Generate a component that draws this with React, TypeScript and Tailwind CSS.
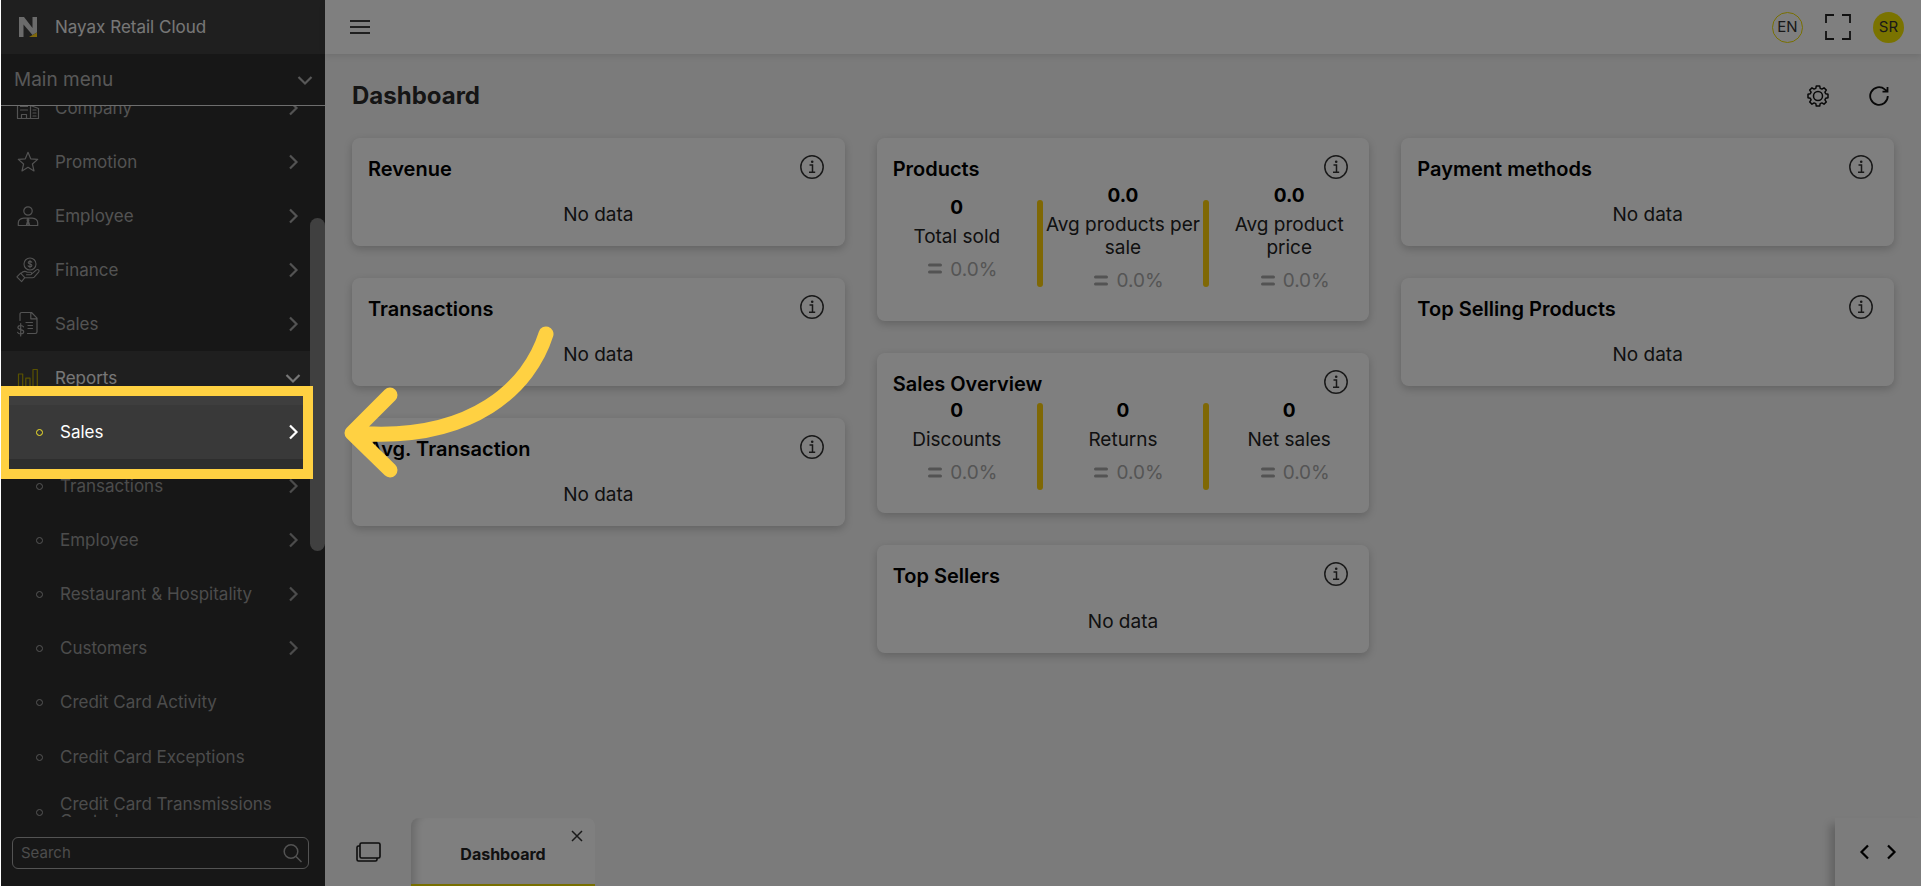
import type { ReactNode } from "react";

type Stat = { value: string; label: string; change: string };

const MENU = [
  { label: "Company", icon: <CompanyIcon /> },
  { label: "Promotion", icon: <StarIcon /> },
  { label: "Employee", icon: <EmployeeIcon /> },
  { label: "Finance", icon: <FinanceIcon /> },
  { label: "Sales", icon: <SalesIcon /> },
];

const REPORTS = [
  { label: "Sales", children: true, active: true },
  { label: "Transactions", children: true },
  { label: "Employee", children: true },
  { label: "Restaurant & Hospitality", children: true },
  { label: "Customers", children: true },
  { label: "Credit Card Activity" },
  { label: "Credit Card Exceptions" },
  { label: "Credit Card Transmissions Control" },
];

const PRODUCT_STATS: Stat[] = [
  { value: "0", label: "Total sold", change: "0.0%" },
  { value: "0.0", label: "Avg products per sale", change: "0.0%" },
  { value: "0.0", label: "Avg product price", change: "0.0%" },
];

const SALES_STATS: Stat[] = [
  { value: "0", label: "Discounts", change: "0.0%" },
  { value: "0", label: "Returns", change: "0.0%" },
  { value: "0", label: "Net sales", change: "0.0%" },
];

function Line({ size, children, className = "" }: { size: number; children: ReactNode; className?: string }) {
  return (
    <svg
      width={size}
      height={size}
      viewBox="0 0 24 24"
      fill="none"
      stroke="currentColor"
      strokeWidth="1.2"
      strokeLinecap="round"
      strokeLinejoin="round"
      className={className}
      aria-hidden="true"
    >
      {children}
    </svg>
  );
}

function CompanyIcon() {
  return (
    <Line size={24}>
      <path d="M1.5 22.5V3h13v19.5zM14.5 9.5l8 3v10h-8M5.5 22.500v-4h5v4M4.500 7h7M4.500 10.500h7M4.500 14h7M17 14h3M17 17h3M17 20h3" />
    </Line>
  );
}

function StarIcon() {
  return (
    <Line size={24}>
      <path d="M12 2.300l2.700 6.500 7 .6-5.300 4.600 1.600 6.900L12 17.300l-6 3.600 1.600-6.900-5.300-4.600 7-.6z" />
    </Line>
  );
}

function EmployeeIcon() {
  return (
    <Line size={24}>
      <circle cx="12" cy="7" r="4.200" />
      <path d="M2.300 21.500v-2.500c0-3 2.500-4.500 5.500-4.800h8.400c3 .3 5.500 1.800 5.500 4.800v2.500zM12 14.500l-1 1.500.6 1.200-1.200 4M12 14.500l1 1.500-.6 1.200 1.200 4M12 16v5" />
    </Line>
  );
}

function FinanceIcon() {
  return (
    <svg width="24" height="26" viewBox="0 0 24 26" fill="none" stroke="currentColor" strokeWidth="1.100" strokeLinecap="round" strokeLinejoin="round" aria-hidden="true">
      <circle cx="14" cy="7" r="6" />
      <path d="M15.800 5.200c-.4-.6-1-.8-1.800-.8-1 0-1.800.4-1.800 1.300 0 1.700 3.700.9 3.700 2.700 0 .8-.8 1.300-1.900 1.300-.9 0-1.600-.3-1.900-.9M14 3.300v7.400" />
      <path d="M.9 19.800l3.700-3.600 4.200 4.400-3.200 4zM5 16.400c2-2.300 4-2.700 6.300-1.200h3.200c1.600.2 1.500 2.500 0 2.600h-4M16 16.700l4.500-3.800c1.500-.9 3.200.3 2.300 1.900l-4.600 5.300c-.5.5-1 .6-1.700.6H8.800" />
    </svg>
  );
}

function SalesIcon() {
  return (
    <svg width="24" height="26" viewBox="0 0 24 26" fill="none" stroke="currentColor" strokeWidth="1.200" strokeLinecap="round" strokeLinejoin="round" aria-hidden="true">
      <path d="M4 9.500V3.200c0-1 .7-1.700 1.700-1.700h9.800l5.500 5.700v13.600c0 1-.7 1.700-1.700 1.700H11.500M14.800 1.800v6h6M10 11.500h6.500M12 14.500h4.500M12 17.500h4.500" />
      <path d="M7.500 15.800c-.6-.9-1.500-1.300-2.800-1.300-1.700 0-2.800.8-2.800 2.100 0 2.700 5.800 1.500 5.800 4.200 0 1.300-1.200 2.100-3 2.100-1.400 0-2.500-.5-3-1.500M4.700 12.500v12.500" />
    </svg>
  );
}

function ReportsIcon() {
  return (
    <Line size={24}>
      <path d="M2.500 22V8h4.200v14zM9.800 22V12.200h4.200V22zM17 22V3.500h4.300V22z" />
    </Line>
  );
}

function Chevron({ dir = "right" }: { dir?: "right" | "down" | "left" }) {
  const paths = { right: "M5 1.500l6.500 6.500L5 14.500", left: "M11 1.500L4.500 8l6.500 6.500", down: "M1.500 5L8 11.500 14.500 5" };
  return (
    <svg width="16" height="16" viewBox="0 0 16 16" fill="none" stroke="currentColor" strokeWidth="2.200" className="shrink-0" aria-hidden="true">
      <path d={paths[dir]} />
    </svg>
  );
}

function Sidebar() {
  return (
    <aside className="flex w-[324px] shrink-0 flex-col bg-[#2e2e2e]">
      <div className="flex h-[54px] shrink-0 items-center bg-[#3e3e3e] pl-[18px]">
        <svg width="18" height="20" viewBox="0 0 18 20" aria-hidden="true">
          <path d="M0 0h5l8.500 11V0H18v15.500L13.500 18 4.500 7.500V20H0z" fill="#d6d6d6" />
          <path d="M10 20h8v-4.500z" fill="#ffd11a" />
        </svg>
        <span className="ml-[18px] text-[17px] leading-6 text-[#eeeeee]">Nayax Retail Cloud</span>
      </div>
      <button type="button" className="flex h-[52px] shrink-0 items-center justify-between border-b border-[#dddddd] pr-3 pl-[13px] text-[#b0b0b0]">
        <span className="text-[19px] leading-6">Main menu</span>
        <Chevron dir="down" />
      </button>
      <nav className="relative min-h-0 flex-1 overflow-hidden">
        <ul className="-mt-[25px] text-[17px] leading-[17px] text-[#a6a6a6]">
          {MENU.map((item) => (
            <li key={item.label}>
              <a href="#" className="flex h-[54px] items-center pr-6 pl-[15px]">
                <span className="flex w-[39px] shrink-0">{item.icon}</span>
                <span className="flex-1">{item.label}</span>
                <Chevron />
              </a>
            </li>
          ))}
          <li>
            <a href="#" className="flex h-[54px] items-center bg-[#3e3e3e] pr-6 pl-[15px] text-[#eeeeee]">
              <span className="flex w-[39px] shrink-0 text-[#b3a400]">
                <ReportsIcon />
              </span>
              <span className="flex-1">Reports</span>
              <Chevron dir="down" />
            </a>
            <ul>
              {REPORTS.map((item) => (
                <li key={item.label}>
                  <a
                    href="#"
                    className={
                      item.active
                        ? "flex h-[54px] items-center bg-[#393939] pr-6 pl-[35px] text-white"
                        : item.children
                          ? "flex h-[54px] items-center pr-6 pl-[35px] text-[#999999]"
                          : "flex h-[55px] items-center pr-6 pl-[35px] text-[#999999]"
                    }
                  >
                    <span
                      className={
                        item.active
                          ? "mr-[17px] size-[7px] shrink-0 rounded-full border border-[#f5e52a]"
                          : "mr-[17px] size-[7px] shrink-0 rounded-full border border-[#aaaaaa]"
                      }
                    />
                    <span className="flex-1">{item.label}</span>
                    {item.children ? <Chevron /> : <span className="w-4" />}
                  </a>
                </li>
              ))}
            </ul>
          </li>
        </ul>
        <div className="absolute top-[112px] right-0 h-[333px] w-[15px] rounded-full bg-[#808080]" />
      </nav>
      <div className="flex h-[69px] shrink-0 items-center pt-[2px] pr-4 pl-[11px]">
        <label className="flex h-8 w-full items-center rounded-md border border-[#a6a6a6] pr-[6px] pl-2 text-[#a6a6a6]">
          <input
            type="search"
            placeholder="Search"
            aria-label="Search"
            className="min-w-0 flex-1 bg-transparent text-[15px] leading-5 outline-none placeholder:text-[#999999]"
          />
          <svg width="20" height="20" viewBox="0 0 20 20" fill="none" stroke="currentColor" strokeWidth="1.500" aria-hidden="true">
            <circle cx="9" cy="8.500" r="6.800" />
            <path d="M14 13.500l5.500 5.500" />
          </svg>
        </label>
      </div>
    </aside>
  );
}

function InfoButton() {
  return (
    <button type="button" aria-label="More information" className="text-[#333333]">
      <svg width="24" height="24" viewBox="0 0 24 24" fill="none" stroke="currentColor" aria-hidden="true">
        <circle cx="12" cy="12" r="11.200" strokeWidth="1.500" />
        <path d="M9.500 10h3v7M9 17.300h6.200" strokeWidth="1.500" />
        <circle cx="12.200" cy="6.800" r="1.300" fill="currentColor" stroke="none" />
      </svg>
    </button>
  );
}

function Card({ title, stats }: { title: string; stats?: Stat[] }) {
  return (
    <section className="rounded-lg bg-white pb-[19px] shadow-[0_3px_8px_rgba(0,0,0,0.2)]">
      <div className="flex items-start justify-between pt-[17px] pr-[21px] pl-4">
        <h2 className="text-xl leading-[29px] font-semibold text-black">{title}</h2>
        <InfoButton />
      </div>
      {stats ? (
        <div className="flex items-center text-[19px] leading-[23px]">
          {stats.map((stat, i) => (
            <div key={stat.label} className="contents">
              {i > 0 && <div className="h-[87px] w-[6px] shrink-0 rounded-full bg-[#ffd00a]" />}
              <div className="flex min-w-0 flex-1 flex-col items-center px-px pb-[10px] text-center">
                <strong className="font-bold text-black">{stat.value}</strong>
                <span className="mt-[6px] text-[#222222]">{stat.label}</span>
                <span className="mt-[10px] flex items-center gap-2 pl-3 text-[#aaaaaa]">
                  <svg width="14" height="12" viewBox="0 0 14 12" fill="none" stroke="#a6a6a6" strokeWidth="3" strokeLinecap="round" aria-hidden="true">
                    <path d="M1.500 2h11M1.500 9h11" />
                  </svg>
                  {stat.change}
                </span>
              </div>
            </div>
          ))}
        </div>
      ) : (
        <p className="pt-[19px] text-center text-[19px] leading-6 text-[#222222]">No data</p>
      )}
    </section>
  );
}

function TopBar() {
  return (
    <header className="relative flex h-[54px] shrink-0 items-center justify-between bg-white pr-[17px] pl-[25px] shadow-[0_2px_6px_rgba(0,0,0,0.1)]">
      <button type="button" aria-label="Toggle menu">
        <svg width="20" height="14" viewBox="0 0 20 14" stroke="black" strokeWidth="1.600" aria-hidden="true">
          <path d="M0 1h20M0 7h20M0 13h20" />
        </svg>
      </button>
      <div className="flex items-center">
        <button type="button" className="flex size-[31px] items-center justify-center rounded-full border border-[#f0df00] text-[15px] text-[#333333]">
          EN
        </button>
        <button type="button" aria-label="Full screen" className="ml-[22px]">
          <svg width="26" height="26" viewBox="0 0 26 26" fill="none" stroke="#222" strokeWidth="1.800" aria-hidden="true">
            <path d="M1 9V1h8M17 1h8v8M25 17v8h-8M9 25H1v-8" />
          </svg>
        </button>
        <button type="button" className="ml-[22px] flex size-[31px] items-center justify-center rounded-full bg-[#f5e600] text-[15px] text-[#333333]">
          SR
        </button>
      </div>
    </header>
  );
}

function GearIcon() {
  return (
    <svg width="22" height="22" viewBox="0 0 22 22" fill="none" stroke="#111" strokeWidth="1.500" strokeLinejoin="round" aria-hidden="true">
      <circle cx="11" cy="11" r="4.500" />
      <path d="M9.300 1h3.400l.5 2.400 1.700.7 2.100-1.300 2.300 2.300-1.400 2 .8 1.700 2.300.5v3.400l-2.300.5-.8 1.700 1.400 2-2.300 2.300-2.100-1.300-1.700.7-.5 2.400H9.300l-.5-2.400-1.700-.7-2.100 1.300-2.300-2.300 1.400-2-.8-1.700L1 12.700V9.300l2.300-.5.8-1.700-1.400-2L5 2.800l2.100 1.300 1.700-.7z" />
    </svg>
  );
}

function BottomBar() {
  return (
    <footer className="flex h-[68px] shrink-0 items-stretch">
      <button type="button" aria-label="Open windows" className="flex w-[86px] items-center justify-center">
        <svg width="25" height="20" viewBox="0 0 25 20" fill="none" stroke="#1a1a1a" strokeWidth="1.600" strokeLinejoin="round" aria-hidden="true">
          <rect x="4" y="1" width="20" height="15" rx="1.500" />
          <path d="M4 4H2.500C1.500 4 1 4.500 1 5.500v12c0 1 .5 1.500 1.500 1.500h17c1 0 1.500-.5 1.500-1.500V16" />
        </svg>
      </button>
      <div className="relative flex w-[184px] flex-col rounded-t-lg border-b-2 border-[#f0df00] bg-white shadow-[inset_10px_0_8px_-6px_rgba(0,0,0,0.18)]">
        <button type="button" className="flex-1 pt-[5px] text-base leading-6 font-bold text-[#222222]">
          Dashboard
        </button>
        <button type="button" aria-label="Close Dashboard" className="absolute top-3 right-3">
          <svg width="12" height="12" viewBox="0 0 12 12" stroke="#333" strokeWidth="1.500" aria-hidden="true">
            <path d="M1 1l10 10M11 1L1 11" />
          </svg>
        </button>
      </div>
      <div className="flex-1" />
      <div className="flex w-[86px] items-center justify-center gap-[10px] bg-[#f8f8f8] shadow-[-5px_6px_8px_rgba(0,0,0,0.2)]">
        <button type="button" aria-label="Previous tab"><Chevron dir="left" /></button>
        <button type="button" aria-label="Next tab"><Chevron /></button>
      </div>
    </footer>
  );
}

export default function App() {
  return (
    <div className="h-screen bg-white px-px font-['Inter','Liberation_Sans',sans-serif]">
      <div className="relative flex h-full overflow-hidden">
        <Sidebar />
        <div className="flex min-w-0 flex-1 flex-col bg-[#f6f6f6]">
          <TopBar />
          <main className="min-h-0 flex-1 px-[27px]">
            <div className="flex h-[84px] items-center justify-between pr-[5px]">
              <h1 className="text-2xl leading-8 font-bold text-[#2b2b2b]">Dashboard</h1>
              <div className="flex items-center gap-10">
                <button type="button" aria-label="Settings"><GearIcon /></button>
                <button type="button" aria-label="Refresh">
                  <svg width="20" height="20" viewBox="0 0 20 20" fill="none" stroke="#111" strokeWidth="1.800" aria-hidden="true">
                    <path d="M18.800 10a8.800 8.800 0 1 1-3-6.600l2.400 2M18.500 1v4.700h-5" />
                  </svg>
                </button>
              </div>
            </div>
            <div className="grid grid-cols-3 items-start gap-8">
              <div className="flex flex-col gap-8">
                <Card title="Revenue" />
                <Card title="Transactions" />
                <Card title="Avg. Transaction" />
              </div>
              <div className="flex flex-col gap-8">
                <Card title="Products" stats={PRODUCT_STATS} />
                <Card title="Sales Overview" stats={SALES_STATS} />
                <Card title="Top Sellers" />
              </div>
              <div className="flex flex-col gap-8">
                <Card title="Payment methods" />
                <Card title="Top Selling Products" />
              </div>
            </div>
          </main>
          <BottomBar />
        </div>

        <div className="pointer-events-none absolute top-[386px] -left-0.5 h-[93px] w-[314px] border-10 border-[#ffd142] shadow-[0_0_0_9999px_rgba(0,0,0,0.5)]" />
        <svg
          width="220"
          height="160"
          viewBox="0 0 220 160"
          fill="none"
          stroke="#ffd142"
          strokeWidth="15"
          strokeLinecap="round"
          strokeLinejoin="round"
          className="pointer-events-none absolute top-[323px] left-[339px]"
          aria-hidden="true"
        >
          <path d="M206 11C190 62 134 120 14 110M50 72L12 110l38 37" />
        </svg>
      </div>
    </div>
  );
}
